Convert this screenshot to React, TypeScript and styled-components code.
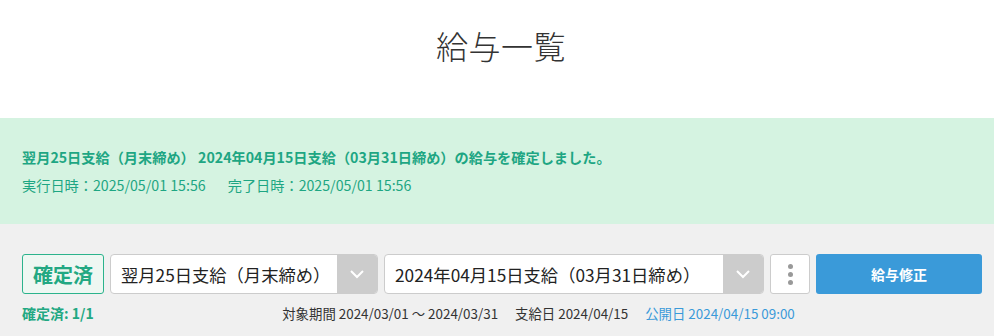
import React from "react";
import styled, { createGlobalStyle } from "styled-components";

const GlobalStyle = createGlobalStyle`
  body {
    margin: 0;
    background: #f0f0f0;
    font-family: "Noto Sans CJK JP", "Noto Sans", sans-serif;
    color: #333;
  }
`;

const Header = styled.header`
  height: 118px;
  background: #fff;
  display: flex;
  justify-content: center;
  padding: 23px 0 0 8px;
  box-sizing: border-box;
`;

const Title = styled.h1`
  margin: 0;
  font-size: 32px;
  font-weight: 300;
  line-height: 44px;
  color: #333;
  letter-spacing: 0.5px;
`;

const Notice = styled.section`
  height: 106px;
  background: #d5f3e1;
  box-sizing: border-box;
  padding: 25px 22px 0;
  color: #1ea683;
  font-size: 14.2px;
`;

const NoticeLine = styled.p<{ $bold?: boolean }>`
  margin: 0;
  line-height: 28px;
  font-weight: ${(p) => (p.$bold ? 700 : 400)};
`;

const Gap = styled.span`
  display: inline-block;
  width: 22px;
`;

const Panel = styled.section`
  padding: 30px 12px 0 22px;
`;

const Controls = styled.div`
  display: flex;
  gap: 6px;
  height: 40px;
`;

const Badge = styled.div`
  width: 82px;
  box-sizing: border-box;
  border: 1px solid #2bb38c;
  border-radius: 3px;
  background: #eef7f2;
  color: #22a882;
  font-size: 20px;
  font-weight: 700;
  display: flex;
  align-items: center;
  justify-content: center;
`;

const Select = styled.div<{ $width: number }>`
  width: ${(p) => p.$width}px;
  box-sizing: border-box;
  border: 1px solid #ccc;
  border-radius: 4px;
  background: #fff;
  display: flex;
  overflow: hidden;
`;

const SelectText = styled.div`
  flex: 1;
  display: flex;
  align-items: center;
  padding-left: 10px;
  font-size: 17.3px;
  color: #222;
  white-space: nowrap;
`;

const Arrow = styled.div`
  width: 40px;
  background: #ccc;
  display: flex;
  align-items: center;
  justify-content: center;
`;

const MenuButton = styled.div`
  width: 40px;
  box-sizing: border-box;
  border: 1px solid #ccc;
  border-radius: 3px;
  background: #fff;
  display: flex;
  flex-direction: column;
  align-items: center;
  justify-content: center;
  gap: 3px;
`;

const Dot = styled.span`
  width: 5px;
  height: 5px;
  border-radius: 50%;
  background: #999;
`;

const PrimaryButton = styled.button`
  width: 166px;
  border: none;
  border-radius: 3px;
  background: #3a9ad9;
  color: #fff;
  font-family: inherit;
  font-size: 14px;
  font-weight: 700;
`;

const InfoRow = styled.div`
  display: flex;
  align-items: center;
  margin-top: 10px;
  line-height: 18px;
`;

const Status = styled.div`
  color: #22a882;
  font-size: 14px;
  font-weight: 700;
  width: 73px;
`;

const Period = styled.div`
  flex: 1;
  text-align: center;
  font-size: 13.4px;
  color: #333;
`;

const Item = styled.span<{ $blue?: boolean; $first?: boolean }>`
  color: ${(p) => (p.$blue ? "#3a9ad9" : "#333")};
  margin-left: ${(p) => (p.$first ? 0 : 17)}px;
`;

const Chevron = () => (
  <svg width="16" height="10" viewBox="0 0 16 10">
    <path d="M2 2l6 6 6-6" fill="none" stroke="#fff" strokeWidth="2" />
  </svg>
);

export default function App() {
  return (
    <>
      <GlobalStyle />
      <Header>
        <Title>給与一覧</Title>
      </Header>
      <Notice>
        <NoticeLine $bold>
          翌月25日支給（月末締め） 2024年04月15日支給（03月31日締め）の給与を確定しました。
        </NoticeLine>
        <NoticeLine>
          実行日時：2025/05/01 15:56
          <Gap />
          完了日時：2025/05/01 15:56
        </NoticeLine>
      </Notice>
      <Panel>
        <Controls>
          <Badge>確定済</Badge>
          <Select $width={268}>
            <SelectText>翌月25日支給（月末締め）</SelectText>
            <Arrow>
              <Chevron />
            </Arrow>
          </Select>
          <Select $width={380}>
            <SelectText>2024年04月15日支給（03月31日締め）</SelectText>
            <Arrow>
              <Chevron />
            </Arrow>
          </Select>
          <MenuButton>
            <Dot />
            <Dot />
            <Dot />
          </MenuButton>
          <PrimaryButton>給与修正</PrimaryButton>
        </Controls>
        <InfoRow>
          <Status>確定済: 1/1</Status>
          <Period>
            <Item $first>対象期間 2024/03/01 〜 2024/03/31</Item>
            <Item>支給日 2024/04/15</Item>
            <Item $blue>公開日 2024/04/15 09:00</Item>
          </Period>
        </InfoRow>
      </Panel>
    </>
  );
}
